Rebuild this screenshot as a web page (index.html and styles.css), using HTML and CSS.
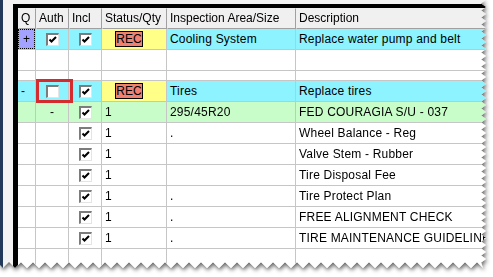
FILE: index.html
```html
<!DOCTYPE html>
<html lang="en">
<head>
   <meta charset="UTF-8">
   <title>Inspection lines</title>
   <link rel="stylesheet" href="styles.css">
</head>
<body>

   <div class="shot">
      <div class="paper" id="paper">
         <div class="frame">
            <div class="grid">
               <div class="row head">
                  <div class="cell">Q</div>
                  <div class="cell">Auth</div>
                  <div class="cell">Incl</div>
                  <div class="cell">Status/Qty</div>
                  <div class="cell">Inspection Area/Size</div>
                  <div class="cell">Description</div>
               </div>

               <div class="row aqua">
                  <div class="cell q focus">+</div>
                  <div class="cell mid"><span class="chk on"></span></div>
                  <div class="cell mid"><span class="chk on"></span></div>
                  <div class="cell status"><span class="rec">REC</span></div>
                  <div class="cell">Cooling System</div>
                  <div class="cell">Replace water pump and belt</div>
               </div>

               <div class="row">
                  <div class="cell"></div><div class="cell"></div><div class="cell"></div>
                  <div class="cell"></div><div class="cell"></div><div class="cell"></div>
               </div>
               <div class="row">
                  <div class="cell"></div><div class="cell"></div><div class="cell"></div>
                  <div class="cell"></div><div class="cell"></div><div class="cell"></div>
               </div>

               <div class="row aqua">
                  <div class="cell">-</div>
                  <div class="cell mid"><span class="chk"></span></div>
                  <div class="cell mid"><span class="chk on"></span></div>
                  <div class="cell status"><span class="rec">REC</span></div>
                  <div class="cell">Tires</div>
                  <div class="cell">Replace tires</div>
               </div>

               <div class="row green">
                  <div class="cell"></div>
                  <div class="cell center">-</div>
                  <div class="cell mid"><span class="chk on"></span></div>
                  <div class="cell">1</div>
                  <div class="cell">295/45R20</div>
                  <div class="cell">FED COURAGIA S/U - 037</div>
               </div>

               <div class="row">
                  <div class="cell"></div><div class="cell"></div>
                  <div class="cell mid"><span class="chk on"></span></div>
                  <div class="cell">1</div>
                  <div class="cell">.</div>
                  <div class="cell">Wheel Balance - Reg</div>
               </div>
               <div class="row">
                  <div class="cell"></div><div class="cell"></div>
                  <div class="cell mid"><span class="chk on"></span></div>
                  <div class="cell">1</div>
                  <div class="cell"></div>
                  <div class="cell">Valve Stem - Rubber</div>
               </div>
               <div class="row">
                  <div class="cell"></div><div class="cell"></div>
                  <div class="cell mid"><span class="chk on"></span></div>
                  <div class="cell">1</div>
                  <div class="cell"></div>
                  <div class="cell">Tire Disposal Fee</div>
               </div>
               <div class="row">
                  <div class="cell"></div><div class="cell"></div>
                  <div class="cell mid"><span class="chk on"></span></div>
                  <div class="cell">1</div>
                  <div class="cell">.</div>
                  <div class="cell">Tire Protect Plan</div>
               </div>
               <div class="row">
                  <div class="cell"></div><div class="cell"></div>
                  <div class="cell mid"><span class="chk on"></span></div>
                  <div class="cell">1</div>
                  <div class="cell">.</div>
                  <div class="cell">FREE ALIGNMENT CHECK</div>
               </div>
               <div class="row">
                  <div class="cell"></div><div class="cell"></div>
                  <div class="cell mid"><span class="chk on"></span></div>
                  <div class="cell">1</div>
                  <div class="cell">.</div>
                  <div class="cell">TIRE MAINTENANCE GUIDELINES</div>
               </div>
               <div class="row">
                  <div class="cell"></div><div class="cell"></div><div class="cell"></div>
                  <div class="cell"></div><div class="cell"></div><div class="cell"></div>
               </div>
            </div>
         </div>

         <!-- callout round the Auth box of the Tires line -->
         <div class="callout"></div>
      </div>
   </div>

   <script src="script.js"></script>
</body>
</html>
```

FILE: styles.css
```css
body {
   margin: 0;
   background: #fff;
   font-family: "Liberation Sans", Arial, sans-serif;
   font-size: 12px;
   color: #000;
}

.shot {
   width: 493px;
   height: 277px;
   filter: drop-shadow(1px 2px 2px rgba(0, 0, 0, 0.6));
}

.paper {
   position: relative;
   width: 487px;
   height: 269px;
   box-sizing: border-box;
   border-left: 3px solid #22395a;
   background: #f3f3f3;
   padding: 4px 0 0 10px;
   overflow: hidden;
}

.frame {
   border-top: 4px solid #000;
   border-left: 5px solid #000;
   height: 100%;
   background: #fff;
}

.grid {
   display: grid;
   grid-template-columns: 17px 32px 32px 64px 128px 200px;
   grid-template-rows: 20px 20px 20px 9px repeat(8, 20px) 20px;
   gap: 1px;
   width: 478px;
   background: #c6c6c6;
}

.row {
   display: contents;
}

.cell {
   background: #fff;
   padding-left: 3px;
   line-height: 20px;
   letter-spacing: 0.2px;
   white-space: nowrap;
   overflow: hidden;
}

.head .cell {
   background: #f0f0f0;
   letter-spacing: 0;
   box-shadow: 1px 1px 0 #a0a0a0;
}

.aqua .cell { background: #8cf3ff; }
.aqua .status { background: #ffff88; }
.green .cell { background: #c8fcc8; }

.q.focus {
   background: #a3a3ff;
   outline: 1px dotted #000;
   outline-offset: -1px;
   text-align: center;
   padding-left: 0;
}

.center {
   text-align: center;
   padding-left: 0;
}

.mid {
   display: flex;
   align-items: center;
   justify-content: center;
   padding-left: 0;
}

.chk {
   width: 13px;
   height: 13px;
   box-sizing: border-box;
   border-top: 2px solid #7c7c7c;
   border-left: 2px solid #7c7c7c;
   border-right: 1px solid #e4e4e4;
   border-bottom: 1px solid #e4e4e4;
   background: #fff;
}

.chk.on {
   background: #fff url("data:image/svg+xml,%3Csvg xmlns='http://www.w3.org/2000/svg' width='10' height='10'%3E%3Cpath d='M1.5 4.5 L3.5 6.5 L8 2' fill='none' stroke='%23000' stroke-width='2'/%3E%3C/svg%3E") no-repeat 0 0;
}

.status {
   display: flex;
   align-items: center;
   padding-left: 13px;
}

.rec {
   width: 28px;
   height: 16px;
   box-sizing: border-box;
   border: 1px solid #000;
   background: #f08070;
   line-height: 14px;
   letter-spacing: 0;
   text-align: center;
}

.callout {
   position: absolute;
   left: 33px;
   top: 79px;
   width: 37px;
   height: 24px;
   box-sizing: border-box;
   border: 3px solid #d42b2f;
}
```

FILE: script.js
```js
// torn right and bottom edge of the screenshot
const paper = document.getElementById('paper');
const w = paper.offsetWidth;
const h = paper.offsetHeight;
const pts = ['0px 0px'];

let i = 0;
for (let y = 0; y < h - 6; y += 3.5) {
   pts.push(`${i % 2 ? w - 6 : w - 1}px ${y}px`);
   i++;
}
i = 0;
for (let x = w - 4; x > 0; x -= 6) {
   pts.push(`${x}px ${i % 2 ? h - 7 : h - 1}px`);
   i++;
}
pts.push(`0px ${h - 4}px`);

paper.style.clipPath = `polygon(${pts.join(', ')})`;
```
